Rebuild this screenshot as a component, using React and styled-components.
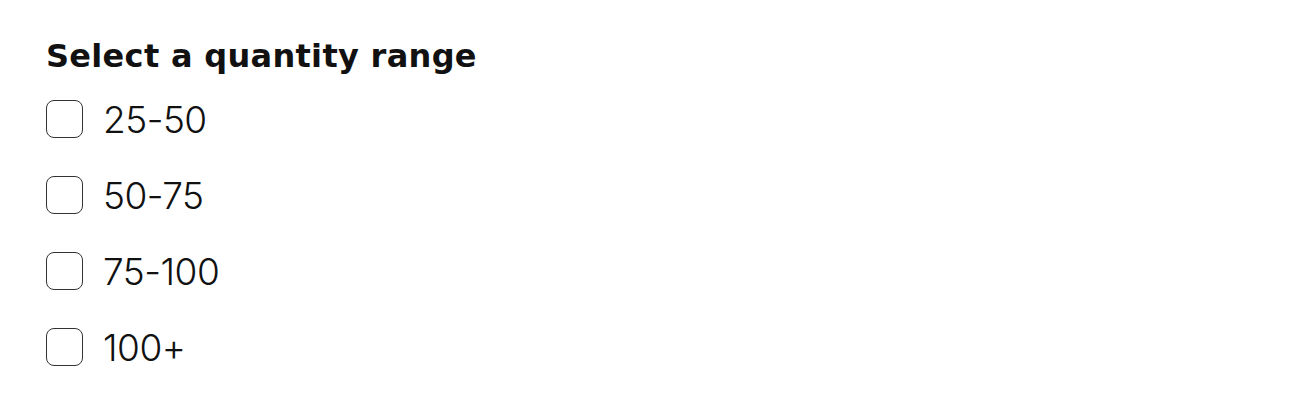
import styled, { createGlobalStyle } from "styled-components";

const GlobalStyle = createGlobalStyle`
  body {
    margin: 0;
    background: #ffffff;
    font-family: Inter, "Noto Sans", sans-serif;
    color: #111111;
  }
`;

const Panel = styled.div`
  padding: 34px 46px;
`;

const Title = styled.h2`
  margin: 0 0 22px 0;
  font-family: "DejaVu Sans", Inter, sans-serif;
  font-size: 32px;
  font-weight: 700;
  letter-spacing: 0.3px;
  line-height: 44px;
`;

const List = styled.div`
  display: flex;
  flex-direction: column;
  gap: 38px;
`;

const Row = styled.label`
  display: flex;
  align-items: center;
  gap: 20px;
  height: 38px;
  cursor: pointer;
`;

const Box = styled.input.attrs({ type: "checkbox" })`
  appearance: none;
  margin: 0;
  width: 37px;
  height: 38px;
  border: 1.5px solid #333333;
  border-radius: 8px;
  background: #fff;
`;

const Text = styled.span`
  font-size: 37px;
  font-weight: 300;
  letter-spacing: -0.5px;
  color: #111111;
`;

const ranges = ["25-50", "50-75", "75-100", "100+"];

const App = () => {
  return (
    <Panel>
      <GlobalStyle />
      <Title>Select a quantity range</Title>
      <List>
        {ranges.map((r) => (
          <Row key={r}>
            <Box />
            <Text>{r}</Text>
          </Row>
        ))}
      </List>
    </Panel>
  );
};

export default App;
